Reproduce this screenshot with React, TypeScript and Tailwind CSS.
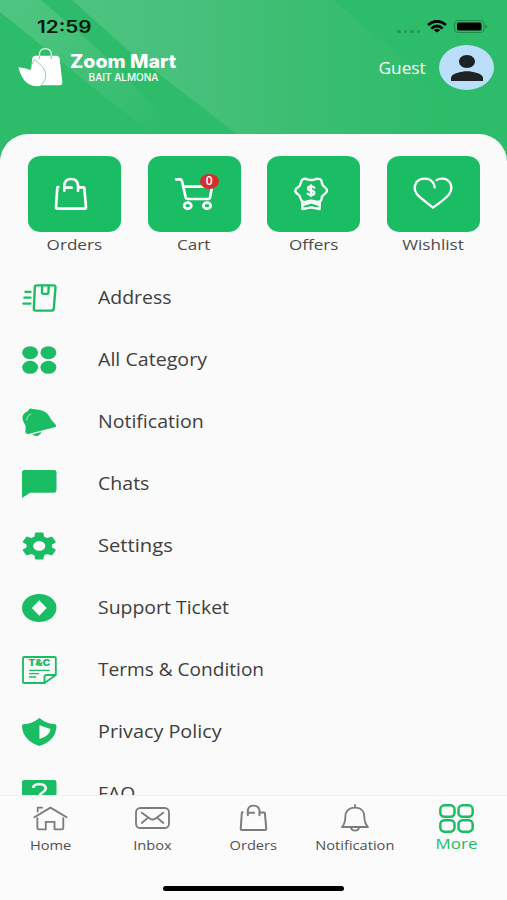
import React from 'react';

type IconProps = { className?: string };

const BagIcon = ({ className, strokeWidth = 8 }: IconProps & { strokeWidth?: number }) => (
  <svg
    viewBox="162 96 102 102"
    preserveAspectRatio="none"
    className={className}
    fill="none"
    stroke="currentColor"
    strokeWidth={strokeWidth}
    strokeLinecap="round"
    strokeLinejoin="round"
  >
    <path d="M175 126 172 127 168 187Q168 191 172 191H254Q258 191 258 187L253 129Q253 127 250 127H237" />
    <path d="M193 137V120Q195 102 213 102Q232 102 234 120V137M193 128H215" />
  </svg>
);

const CartIcon = ({ className }: IconProps) => (
  <svg
    viewBox="522 96 120 102"
    preserveAspectRatio="none"
    className={className}
    fill="none"
    stroke="currentColor"
    strokeWidth="8"
    strokeLinecap="round"
    strokeLinejoin="round"
  >
    <path d="M528 103H541Q545 103 546 108L557 157Q558 162 564 162H625Q629 162 630 158L636 125H555" />
    <ellipse cx="563" cy="182" rx="11" ry="9" />
    <ellipse cx="621" cy="182" rx="11" ry="9" />
  </svg>
);

const OffersIcon = ({ className }: IconProps) => (
  <svg
    viewBox="120 96 108 102"
    preserveAspectRatio="none"
    className={className}
    fill="none"
    stroke="currentColor"
    strokeWidth="7"
    strokeLinejoin="round"
    strokeLinecap="round"
  >
    <path d="M152 102Q157 100 163 103Q175 107 186 103Q193 100 199 102Q206 104 206 111Q207 121 216 127Q223 132 222 138Q221 143 214 148Q206 153 206 160Q205 169 198 170Q192 171 186 169Q175 165 163 169Q156 172 150 170Q144 168 143 161Q142 152 134 147Q126 142 127 136Q128 131 135 127Q143 121 144 112Q145 104 152 102Z" />
    <path d="M148 171V192L175 187 200 192V171M150 180 175 172 199 180" />
    <path d="M184 128Q181 124 174 124Q164 125 165 131Q166 136 175 137Q184 138 184 144Q183 150 174 150Q167 150 164 146M174 121V153" />
  </svg>
);

const HeartIcon = ({ className }: IconProps) => (
  <svg
    viewBox="482 94 120 102"
    preserveAspectRatio="none"
    className={className}
    fill="none"
    stroke="currentColor"
    strokeWidth="7"
    strokeLinecap="round"
    strokeLinejoin="round"
  >
    <path d="M547 128Q545 110 528 103Q505 98 492 113Q481 131 494 149Q501 158 542 189Q582 160 590 149Q602 133 594 116Q585 101 568 102Q559 102 553 106" />
  </svg>
);

const AddressIcon = ({ className }: IconProps) => (
  <svg
    viewBox="67 40 102 86"
    preserveAspectRatio="none"
    className={className}
    fill="none"
    stroke="currentColor"
    strokeWidth="7"
    strokeLinecap="round"
    strokeLinejoin="round"
  >
    <path d="M111 44H160Q167 44 166 51L161 116Q160 122 154 122H107Q101 122 102 115L105 50Q105 44 111 44Z" />
    <path d="M127 45 126 67Q126 70 130 70H141Q145 70 145 66L146 45M77 64H92M74 82H92M71 100H92" />
  </svg>
);

const CategoryIcon = ({ className }: IconProps) => (
  <svg viewBox="67 226 102 84" preserveAspectRatio="none" className={className} fill="currentColor">
    <ellipse cx="91" cy="246" rx="23.500" ry="19.500" />
    <ellipse cx="145" cy="246" rx="23.500" ry="19.500" />
    <ellipse cx="91" cy="290" rx="23.500" ry="19.500" />
    <ellipse cx="145" cy="290" rx="23.500" ry="19.500" />
  </svg>
);

const BellFillIcon = ({ className }: IconProps) => (
  <svg viewBox="66 412 103 84" preserveAspectRatio="none" className={className}>
    <path
      fill="currentColor"
      d="M87 416Q92 411 98 415Q110 416 121 418Q139 423 147 436Q152 448 164 459Q171 466 166 469L85 490Q77 491 76 484L77 466Q67 452 67 440Q70 427 83 422ZM97 491 124 484Q122 493 114 495Q104 498 97 491Z"
    />
    <path d="M80 448Q80 436 93 430" fill="none" stroke="#d5f3e1" strokeWidth="2.500" strokeLinecap="round" />
  </svg>
);

const ChatIcon = ({ className }: IconProps) => (
  <svg viewBox="66 59 103 84" preserveAspectRatio="none" className={className} fill="currentColor">
    <path d="M73 59H162Q169 59 169 66V120Q169 127 162 127H90L66 143V66Q66 59 73 59Z" />
  </svg>
);

const GearIcon = ({ className }: IconProps) => (
  <svg viewBox="2.270 2 19.460 20" preserveAspectRatio="none" className={className} fill="currentColor">
    <path d="M19.140 12.940c.040-.300.060-.610.060-.940 0-.320-.020-.640-.070-.940l2.030-1.580c.180-.140.230-.410.120-.610l-1.920-3.320c-.120-.220-.370-.290-.590-.220l-2.390.960c-.500-.380-1.030-.700-1.620-.940l-.360-2.540c-.040-.240-.240-.410-.480-.410h-3.840c-.240 0-.430.170-.470.410l-.360 2.540c-.590.240-1.130.570-1.620.940l-2.390-.960c-.220-.080-.470 0-.590.220L2.740 8.870c-.120.210-.080.470.120.610l2.030 1.580c-.050.300-.090.630-.090.940s.020.640.070.940l-2.030 1.580c-.180.140-.230.410-.120.610l1.920 3.320c.120.220.370.290.590.220l2.390-.960c.500.380 1.030.700 1.620.940l.360 2.540c.050.240.240.410.480.410h3.840c.240 0 .440-.170.470-.410l.360-2.540c.590-.240 1.130-.560 1.620-.940l2.390.960c.220.080.470 0 .590-.220l1.920-3.320c.120-.220.070-.470-.120-.610l-2.010-1.580zM12 15.400c-1.900 0-3.400-1.500-3.400-3.400s1.500-3.400 3.400-3.400 3.400 1.500 3.400 3.400-1.500 3.400-3.400 3.400z" />
  </svg>
);

const SupportIcon = ({ className }: IconProps) => (
  <svg viewBox="67 431 102 84" preserveAspectRatio="none" className={className}>
    <ellipse cx="118" cy="473" rx="51" ry="42" fill="currentColor" />
    <path d="M118 450 140 473 118 496 96 473Z" fill="#fafafa" />
  </svg>
);

const TermsIcon = ({ className }: IconProps) => (
  <svg viewBox="66 77 103 84" preserveAspectRatio="none" className={className}>
    <g fill="none" stroke="currentColor" strokeWidth="5.500" strokeLinejoin="round">
      <path d="M72 80H163Q167 80 167 84V134L133 158H72Q69 158 69 154V84Q69 80 72 80ZM133 158V140Q133 134 141 134H167" />
      <path d="M87 120H149M87 130H117M87 140H108" strokeWidth="4" />
    </g>
    <text
      x="85"
      y="108"
      textLength="66"
      lengthAdjust="spacingAndGlyphs"
      fill="currentColor"
      fontFamily="Inter, sans-serif"
      fontWeight="900"
      fontSize="25"
    >
      T&amp;C
    </text>
  </svg>
);

const PrivacyIcon = ({ className }: IconProps) => (
  <svg viewBox="66 263 103 84" preserveAspectRatio="none" className={className}>
    <path
      fill="currentColor"
      d="M118 263Q139 280 165 282Q169 282 169 287Q168 330 118 347Q68 330 66 287Q66 282 70 282Q97 280 118 263Z"
    />
    <path d="M118 285 151 296Q150 316 118 326Z" fill="#fafafa" />
  </svg>
);

const FaqIcon = ({ className }: IconProps) => (
  <svg viewBox="66 448 103 84" preserveAspectRatio="none" className={className}>
    <path fill="currentColor" d="M73 448H162Q169 448 169 455V512Q169 518 162 518H135L118 532 101 518H73Q66 518 66 512V455Q66 448 73 448Z" />
    <path d="M99 472Q101 461 117 460Q137 461 137 474Q136 481 127 486Q118 491 118 500M118 510V511" fill="none" stroke="#fafafa" strokeWidth="8" />
  </svg>
);

const HomeIcon = ({ className }: IconProps) => (
  <svg
    viewBox="103 60 104 76"
    preserveAspectRatio="none"
    className={className}
    fill="none"
    stroke="currentColor"
    strokeWidth="5.500"
    strokeLinecap="round"
    strokeLinejoin="round"
  >
    <path d="M107 94 155 65 203 94M117 77V65H130M116 97V127Q116 131 120 131H141V108H167V131H189Q193 131 193 127V97" />
  </svg>
);

const InboxIcon = ({ className }: IconProps) => (
  <svg
    viewBox="406 65 104 66"
    preserveAspectRatio="none"
    className={className}
    fill="none"
    stroke="currentColor"
    strokeWidth="5.500"
    strokeLinecap="round"
    strokeLinejoin="round"
  >
    <rect x="409" y="68" width="98" height="60" rx="13" />
    <path d="M426 82 451 100Q458 105 466 100L490 82M426 113 445 97M490 113 472 97" />
  </svg>
);

const BellIcon = ({ className }: IconProps) => (
  <svg
    viewBox="265 56 84 84"
    preserveAspectRatio="none"
    className={className}
    fill="none"
    stroke="currentColor"
    strokeWidth="5.500"
    strokeLinecap="round"
    strokeLinejoin="round"
  >
    <path d="M307 59V67M307 67C287 67 278 80 278 94C278 108 276 116 268 125H346C338 116 335 108 335 94C335 80 327 67 307 67Z" />
    <path d="M295 128Q298 136 307 136Q316 136 319 128" />
  </svg>
);

const MoreIcon = ({ className }: IconProps) => (
  <svg
    viewBox="557 55 106 86"
    preserveAspectRatio="none"
    className={className}
    fill="none"
    stroke="currentColor"
    strokeWidth="7.500"
  >
    <rect x="561" y="59" width="43" height="34" rx="12" />
    <rect x="616" y="59" width="43" height="34" rx="12" />
    <rect x="561" y="103" width="43" height="34" rx="12" />
    <rect x="616" y="103" width="43" height="34" rx="12" />
  </svg>
);

const LogoIcon = ({ className }: IconProps) => (
  <svg viewBox="54 141 134 120" preserveAspectRatio="none" className={className}>
    <path d="M118 178V160Q121 146 136 146Q151 147 153 160V178" fill="none" stroke="#d9f2e3" strokeWidth="4" />
    <path d="M105 167H168Q177 168 178 176L186 246Q187 256 178 256H104Q92 252 94 215L96 176Q97 168 105 167Z" fill="#fff" />
    <path d="M118 169V176M153 169V176" stroke="#8ad9aa" strokeWidth="4" strokeLinecap="round" />
    <path
      d="M55 202Q75 204 92 210Q91 193 103 178Q131 198 138 218Q138 244 121 257Q99 263 78 247Q64 233 55 202Z"
      fill="#fff"
    />
    <path d="M92 211Q91 193 103 179Q129 198 136 217Q139 242 122 256" fill="none" stroke="#6fcd96" strokeWidth="2.500" />
  </svg>
);

const HeaderBackdrop = ({ className }: IconProps) => (
  <svg viewBox="0 0 507 165" preserveAspectRatio="none" className={className}>
    <defs>
      <linearGradient id="band" x1="0" y1="0" x2="160" y2="135" gradientUnits="userSpaceOnUse">
        <stop offset="0" stopColor="#51c582" />
        <stop offset="0.550" stopColor="#40c077" />
        <stop offset="1" stopColor="#2dbc69" />
      </linearGradient>
      <linearGradient id="sheen" x1="72" y1="0" x2="450" y2="0" gradientUnits="userSpaceOnUse">
        <stop offset="0" stopColor="#4fc381" />
        <stop offset="0.350" stopColor="#45c07a" />
        <stop offset="0.600" stopColor="#3bbe71" />
        <stop offset="1" stopColor="#2dbc69" />
      </linearGradient>
    </defs>
    <rect width="507" height="165" fill="#2dbc69" />
    <path d="M0 0H41L96 47 182 135H152L0 12Z" fill="url(#band)" />
    <path d="M72 0H334L490 135H238L128 50Z" fill="url(#sheen)" />
  </svg>
);

const ACTIONS = [
  { label: 'Orders', icon: <BagIcon className="mr-[7px] h-[34px] w-[34px]" /> },
  { label: 'Cart', icon: <CartIcon className="h-[34px] w-[40px]" />, badge: 0 },
  { label: 'Offers', icon: <OffersIcon className="mr-[5px] h-[34px] w-[36px]" /> },
  { label: 'Wishlist', icon: <HeartIcon className="mb-px h-[34px] w-[40px]" /> },
];

// per-label horizontal stretch gives the wide letterforms
const MENU = [
  { label: 'Address', icon: AddressIcon, stretch: 'scale-x-[1.080]' },
  { label: 'All Category', icon: CategoryIcon, stretch: 'scale-x-[1.090]' },
  { label: 'Notification', icon: BellFillIcon, stretch: 'scale-x-[1.085]' },
  { label: 'Chats', icon: ChatIcon, stretch: 'scale-x-[1.085]' },
  { label: 'Settings', icon: GearIcon, stretch: 'scale-x-[1.120]' },
  { label: 'Support Ticket', icon: SupportIcon, stretch: 'scale-x-[1.080]' },
  { label: 'Terms & Condition', icon: TermsIcon, stretch: 'scale-x-[1.060]' },
  { label: 'Privacy Policy', icon: PrivacyIcon, stretch: 'scale-x-[1.100]' },
  { label: 'FAQ', icon: FaqIcon, stretch: 'scale-x-[1.075]' },
];

const TABS = [
  { label: 'Home', icon: <HomeIcon className="h-[25px] w-[35px]" /> },
  { label: 'Inbox', icon: <InboxIcon className="h-[22px] w-[35px]" /> },
  { label: 'Orders', icon: <BagIcon className="h-7 w-[29px]" strokeWidth={7} /> },
  { label: 'Notification', icon: <BellIcon className="h-7 w-7" /> },
  { label: 'More', icon: <MoreIcon className="h-[29px] w-[35px]" />, active: true },
];

const StatusBar: React.FC = () => (
  <div className="flex h-[42px] items-start justify-between pt-[17px] pr-[19px] pl-[37px]">
    <span className="origin-left scale-x-[1.220] font-[Inter,sans-serif] text-[17px] leading-[21px] font-semibold text-[#07180e]">
      12:59
    </span>
    <div className="flex items-center pt-[3px]">
      <div className="mt-[9px] mr-[7px] flex gap-[3px]">
        {[0, 1, 2, 3].map((i) => (
          <span key={i} className="h-[3px] w-[3.500px] rounded-full bg-[#259553]" />
        ))}
      </div>
      <svg viewBox="0 0 20 13" className="mr-[7px] h-[13px] w-5" fill="none" stroke="#000" strokeWidth="2.700">
        <path d="M1 5Q10-2.500 19 5M4.300 8.500Q10 3.500 15.700 8.500" />
        <path d="M10 12.600 6.800 9.900Q10 7.600 13.200 9.900Z" fill="#000" stroke="none" />
      </svg>
      <svg viewBox="0 0 34 13" className="h-[13px] w-[34px]">
        <rect x="0.500" y="0.500" width="29.500" height="12" rx="3.500" fill="none" stroke="#1f8a4b" />
        <rect x="3" y="2.500" width="24.500" height="8" rx="1.500" fill="#000" />
        <path d="M31.500 4.500Q34.500 6.500 31.500 8.500Z" fill="#1b7541" />
      </svg>
    </div>
  </div>
);

export default function App() {
  return (
    <div className="relative flex h-[900px] w-[507px] flex-col overflow-hidden bg-[#fafafa] font-['Open_Sans',sans-serif]">
      <HeaderBackdrop className="absolute top-0 left-0 h-[165px] w-full" />

      <header className="relative h-[133.500px] shrink-0">
        <StatusBar />
        <div className="flex items-start justify-between pr-[13px] pl-[18px]">
          <div className="flex pt-[5px]">
            <LogoIcon className="h-10 w-[45px]" />
            <div className="ml-[7px] flex w-[107px] flex-col items-center font-[Inter,sans-serif] text-white">
              <span className="mt-[3px] scale-x-[1.060] text-[18.500px] leading-[22px] font-extrabold whitespace-nowrap">
                Zoom Mart
              </span>
              <span className="text-[10px] leading-[11px] font-medium whitespace-nowrap">BAIT ALMONA</span>
            </div>
          </div>
          <div className="flex items-center pt-[3px]">
            <span className="mr-[13px] origin-right scale-x-[1.080] text-[16px] text-white">Guest</span>
            <div className="flex h-[45px] w-[55px] items-center justify-center rounded-[50%] bg-[#bbdefb]">
              <svg viewBox="4 4 16 16" preserveAspectRatio="none" className="h-[26px] w-8" fill="#1c2226">
                <path d="M12 12c2.210 0 4-1.790 4-4s-1.790-4-4-4-4 1.790-4 4 1.790 4 4 4zm0 2c-2.670 0-8 1.340-8 4v2h16v-2c0-2.660-5.330-4-8-4z" />
              </svg>
            </div>
          </div>
        </div>
      </header>

      <main className="relative min-h-0 flex-1 overflow-hidden rounded-t-[28px] bg-[#fafafa]">
        <div className="flex justify-between pt-[22px] pr-[27px] pl-7">
          {ACTIONS.map((action) => (
            <div key={action.label} className="flex w-[93px] flex-col items-center">
              <div className="relative flex h-[76px] w-full items-center justify-center rounded-[13px/11px] bg-[#1abc64] text-white">
                {action.icon}
                {action.badge !== undefined && (
                  <span className="absolute top-[18px] left-[52px] flex h-[15.500px] w-[19px] items-center justify-center rounded-[50%] bg-[#d32f2f] text-[12px] leading-none font-semibold">
                    {action.badge}
                  </span>
                )}
              </div>
              <span className="mt-[2px] mr-px scale-x-[1.140] text-[15px] leading-5 whitespace-nowrap text-[#4a4a4a]">
                {action.label}
              </span>
            </div>
          ))}
        </div>

        <nav className="mt-[13px]">
          {MENU.map(({ label, icon: Icon, stretch }) => (
            <div key={label} className="flex h-[62px] items-center pl-[22px]">
              <Icon className="h-7 w-[34.500px] text-[#1abc64]" />
              <span className={`ml-[41px] origin-left text-[18px] whitespace-nowrap text-[#3f3f3f] ${stretch}`}>
                {label}
              </span>
            </div>
          ))}
        </nav>
      </main>

      <footer className="relative flex h-[105px] shrink-0 flex-col justify-between border-t border-[#f1f1f1] bg-[#fbfbfb]">
        <div className="flex">
          {TABS.map((tab) => (
            <div key={tab.label} className="flex flex-1 flex-col items-center pt-[7px]">
              <div className={tab.active ? 'flex h-[30px] items-center text-[#1abc64]' : 'flex h-[30px] items-center text-[#7c7c7c]'}>
                {tab.icon}
              </div>
              <span
                className={
                  tab.active
                    ? 'scale-x-[1.130] text-[15px] leading-5 text-[#1abc64]'
                    : 'mt-[4px] scale-x-[1.170] text-[12.500px] leading-[18px] text-[#505050]'
                }
              >
                {tab.label}
              </span>
            </div>
          ))}
        </div>
        <div className="mx-auto mb-[9px] h-[5px] w-[181px] rounded-full bg-black" />
      </footer>
    </div>
  );
}
